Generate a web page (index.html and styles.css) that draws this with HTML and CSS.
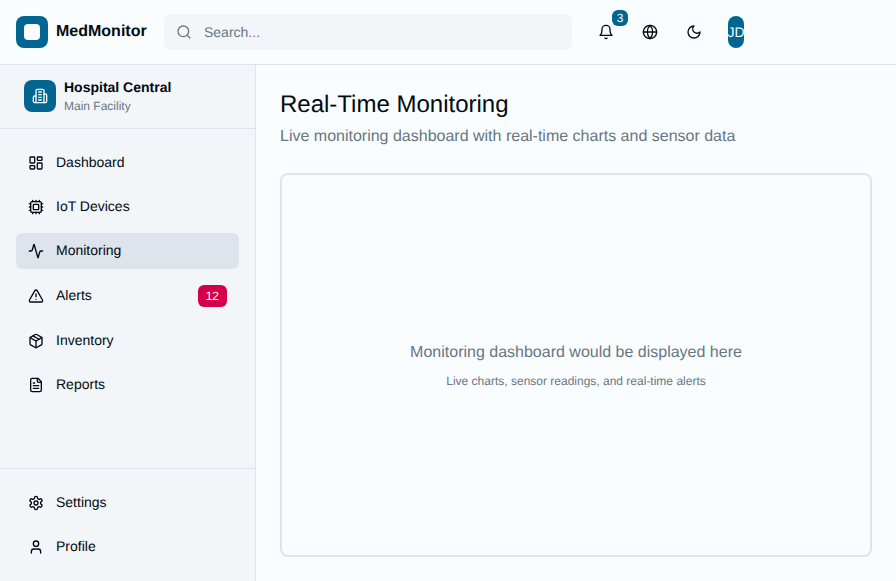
FILE: index.html
```html
<!DOCTYPE html>
<html lang="en">
<head>
<meta charset="utf-8">
<title>MedMonitor</title>
<link rel="stylesheet" href="styles.css">
</head>
<body>
<header class="topbar">
  <div class="brand"><span class="brand-mark"><span class="brand-core"></span></span><span class="brand-name">MedMonitor</span></div>
  <div class="search">
    <svg class="icon" viewBox="0 0 24 24"><circle cx="11" cy="11" r="8"/><path d="m21 21-4.3-4.3"/></svg>
    <span>Search...</span>
  </div>
  <div class="actions">
    <div class="action">
      <svg class="icon" viewBox="0 0 24 24"><path d="M6 8a6 6 0 0 1 12 0c0 7 3 9 3 9H3s3-2 3-9"/><path d="M10.3 21a1.94 1.94 0 0 0 3.4 0"/></svg>
      <span class="count">3</span>
    </div>
    <div class="action"><svg class="icon" viewBox="0 0 24 24"><circle cx="12" cy="12" r="10"/><path d="M12 2a14.5 14.5 0 0 0 0 20 14.5 14.5 0 0 0 0-20"/><path d="M2 12h20"/></svg></div>
    <div class="action"><svg class="icon" viewBox="0 0 24 24"><path d="M12 3a6 6 0 0 0 9 9 9 9 0 1 1-9-9Z"/></svg></div>
    <div class="avatar">JD</div>
  </div>
</header>
<div class="shell">
  <aside class="sidebar">
    <div class="facility">
      <span class="facility-mark"><svg class="icon" viewBox="0 0 24 24"><path d="M6 22V4a2 2 0 0 1 2-2h8a2 2 0 0 1 2 2v18Z"/><path d="M6 12H4a2 2 0 0 0-2 2v6a2 2 0 0 0 2 2h2"/><path d="M18 9h2a2 2 0 0 1 2 2v9a2 2 0 0 1-2 2h-2"/><path d="M10 6h4"/><path d="M10 10h4"/><path d="M10 14h4"/><path d="M10 18h4"/></svg></span>
      <div class="facility-text"><div class="facility-name">Hospital Central</div><div class="facility-sub">Main Facility</div></div>
    </div>
    <nav class="nav">
      <a class="item"><svg class="icon" viewBox="0 0 24 24"><rect width="7" height="9" x="3" y="3" rx="1"/><rect width="7" height="5" x="14" y="3" rx="1"/><rect width="7" height="9" x="14" y="12" rx="1"/><rect width="7" height="5" x="3" y="16" rx="1"/></svg><span class="label">Dashboard</span></a>
      <a class="item"><svg class="icon" viewBox="0 0 24 24"><path d="M12 20v2M12 2v2M17 20v2M17 2v2M2 12h2M2 17h2M2 7h2M20 12h2M20 17h2M20 7h2M7 20v2M7 2v2"/><rect x="4" y="4" width="16" height="16" rx="2"/><rect x="8" y="8" width="8" height="8" rx="1"/></svg><span class="label">IoT Devices</span></a>
      <a class="item active"><svg class="icon" viewBox="0 0 24 24"><path d="M22 12h-2.48a2 2 0 0 0-1.93 1.46l-2.35 8.36a.25.25 0 0 1-.48 0L9.24 2.18a.25.25 0 0 0-.48 0l-2.35 8.36A2 2 0 0 1 4.49 12H2"/></svg><span class="label">Monitoring</span></a>
      <a class="item"><svg class="icon" viewBox="0 0 24 24"><path d="m21.73 18-8-14a2 2 0 0 0-3.48 0l-8 14A2 2 0 0 0 4 21h16a2 2 0 0 0 1.73-3"/><path d="M12 9v4"/><path d="M12 17h.01"/></svg><span class="label">Alerts</span><span class="badge">12</span></a>
      <a class="item"><svg class="icon" viewBox="0 0 24 24"><path d="M11 21.73a2 2 0 0 0 2 0l7-4A2 2 0 0 0 21 16V8a2 2 0 0 0-1-1.73l-7-4a2 2 0 0 0-2 0l-7 4A2 2 0 0 0 3 8v8a2 2 0 0 0 1 1.73z"/><path d="M12 22V12"/><path d="M3.29 7 12 12l8.71-5"/><path d="m7.5 4.27 9 5.15"/></svg><span class="label">Inventory</span></a>
      <a class="item"><svg class="icon" viewBox="0 0 24 24"><path d="M15 2H6a2 2 0 0 0-2 2v16a2 2 0 0 0 2 2h12a2 2 0 0 0 2-2V7Z"/><path d="M14 2v4a2 2 0 0 0 2 2h4"/><path d="M10 9H8"/><path d="M16 13H8"/><path d="M16 17H8"/></svg><span class="label">Reports</span></a>
    </nav>
    <nav class="nav nav-footer">
      <a class="item"><svg class="icon" viewBox="0 0 24 24"><path d="M12.22 2h-.44a2 2 0 0 0-2 2v.18a2 2 0 0 1-1 1.73l-.43.25a2 2 0 0 1-2 0l-.15-.08a2 2 0 0 0-2.73.73l-.22.38a2 2 0 0 0 .73 2.73l.15.1a2 2 0 0 1 1 1.72v.51a2 2 0 0 1-1 1.74l-.15.09a2 2 0 0 0-.73 2.73l.22.38a2 2 0 0 0 2.73.73l.15-.08a2 2 0 0 1 2 0l.43.25a2 2 0 0 1 1 1.73V20a2 2 0 0 0 2 2h.44a2 2 0 0 0 2-2v-.18a2 2 0 0 1 1-1.73l.43-.25a2 2 0 0 1 2 0l.15.08a2 2 0 0 0 2.73-.73l.22-.39a2 2 0 0 0-.73-2.73l-.15-.08a2 2 0 0 1-1-1.74v-.5a2 2 0 0 1 1-1.74l.15-.09a2 2 0 0 0 .73-2.73l-.22-.38a2 2 0 0 0-2.73-.73l-.15.08a2 2 0 0 1-2 0l-.43-.25a2 2 0 0 1-1-1.73V4a2 2 0 0 0-2-2z"/><circle cx="12" cy="12" r="3"/></svg><span class="label">Settings</span></a>
      <a class="item"><svg class="icon" viewBox="0 0 24 24"><path d="M19 21v-2a4 4 0 0 0-4-4H9a4 4 0 0 0-4 4v2"/><circle cx="12" cy="7" r="4"/></svg><span class="label">Profile</span></a>
    </nav>
  </aside>
  <main class="content">
    <h1>Real-Time Monitoring</h1>
    <p class="lead">Live monitoring dashboard with real-time charts and sensor data</p>
    <section class="panel">
      <p class="panel-title">Monitoring dashboard would be displayed here</p>
      <p class="panel-sub">Live charts, sensor readings, and real-time alerts</p>
    </section>
  </main>
</div>
</body>
</html>
```
FILE: styles.css
```css
:root {
  --bg: #f9fdff;
  --side: #f2f6f9;
  --border: #dde5ea;
  --primary: #00658f;
  --text: #020a10;
  --muted: #69767f;
}
* { box-sizing: border-box; }
body {
  margin: 0;
  height: 100vh;
  display: flex;
  flex-direction: column;
  overflow: hidden;
  background: var(--bg);
  color: var(--text);
  font: 14px/20px "Liberation Sans", Arial, sans-serif;
  text-rendering: geometricPrecision;
}
h1, p { margin: 0; font-weight: 400; }
.icon {
  width: 16px;
  height: 16px;
  flex: none;
  display: block;
  fill: none;
  stroke: currentColor;
  stroke-width: 2;
  stroke-linecap: round;
  stroke-linejoin: round;
}
.topbar {
  height: 65px;
  flex: none;
  display: flex;
  align-items: center;
  padding: 0 16px;
  border-bottom: 1px solid var(--border);
}
.brand { width: 148px; display: flex; align-items: center; gap: 8px; flex: none; }
.brand-mark, .facility-mark {
  width: 32px;
  height: 32px;
  flex: none;
  display: flex;
  align-items: center;
  justify-content: center;
  border-radius: 8px;
  background: var(--primary);
  color: var(--bg);
}
.facility-mark { margin-bottom: 1px; }
.brand-core { width: 16px; height: 16px; border-radius: 4px; background: var(--bg); }
.brand-name { font-size: 16px; font-weight: 700; line-height: 24px; }
.search {
  width: 408px;
  height: 36px;
  flex: none;
  display: flex;
  align-items: center;
  gap: 12px;
  padding: 0 12px;
  border-radius: 6px;
  background: #f3f6f8;
  color: var(--muted);
}
.actions { display: flex; align-items: center; gap: 8px; margin-left: 16px; }
.action {
  position: relative;
  width: 36px;
  height: 36px;
  display: flex;
  align-items: center;
  justify-content: center;
}
.count {
  position: absolute;
  top: -4px;
  right: -4px;
  width: 16px;
  height: 16px;
  border-radius: 6px;
  background: var(--primary);
  color: var(--bg);
  font-size: 12px;
  line-height: 16px;
  text-align: center;
}
.avatar {
  width: 16px;
  height: 32px;
  margin-left: 8px;
  display: flex;
  align-items: center;
  justify-content: center;
  overflow: hidden;
  border-radius: 8px;
  background: var(--primary);
  color: var(--bg);
}
.shell { flex: 1; min-height: 0; display: flex; }
.sidebar {
  width: 256px;
  flex: none;
  display: flex;
  flex-direction: column;
  background: var(--side);
  border-right: 1px solid var(--border);
}
.facility {
  height: 64px;
  flex: none;
  display: flex;
  align-items: center;
  gap: 8px;
  padding: 0 24px;
  border-bottom: 1px solid var(--border);
}
.facility-text { margin-bottom: 2px; }
.facility-name { font-weight: 700; line-height: 20px; }
.facility-sub { margin-top: 1px; font-size: 12px; line-height: 16px; color: var(--muted); }
.nav { display: flex; flex-direction: column; gap: 8px; padding: 16px; }
.nav-footer { margin-top: auto; border-top: 1px solid var(--border); }
.item {
  display: flex;
  align-items: center;
  gap: 12px;
  padding: 8px 12px;
  border-radius: 6px;
}
.item.active { background: #dee4eb; }
.label { flex: 1; height: 20px; line-height: 18px; }
.badge {
  padding: 0 8px;
  height: 22px;
  border-radius: 6px;
  background: #d4004b;
  color: var(--bg);
  font-size: 12px;
  line-height: 22px;
  text-align: center;
}
.content { flex: 1; min-width: 0; display: flex; flex-direction: column; padding: 24px; }
h1 { font-size: 24px; line-height: 32px; }
.lead { margin-top: 4px; font-size: 16px; line-height: 24px; color: var(--muted); }
.panel {
  flex: 1;
  margin-top: 24px;
  display: flex;
  flex-direction: column;
  align-items: center;
  justify-content: center;
  gap: 8px;
  border: 2px solid var(--border);
  border-radius: 8px;
  color: var(--muted);
}
.panel-title { font-size: 16px; line-height: 24px; }
.panel-sub { font-size: 12px; line-height: 16px; }
```
